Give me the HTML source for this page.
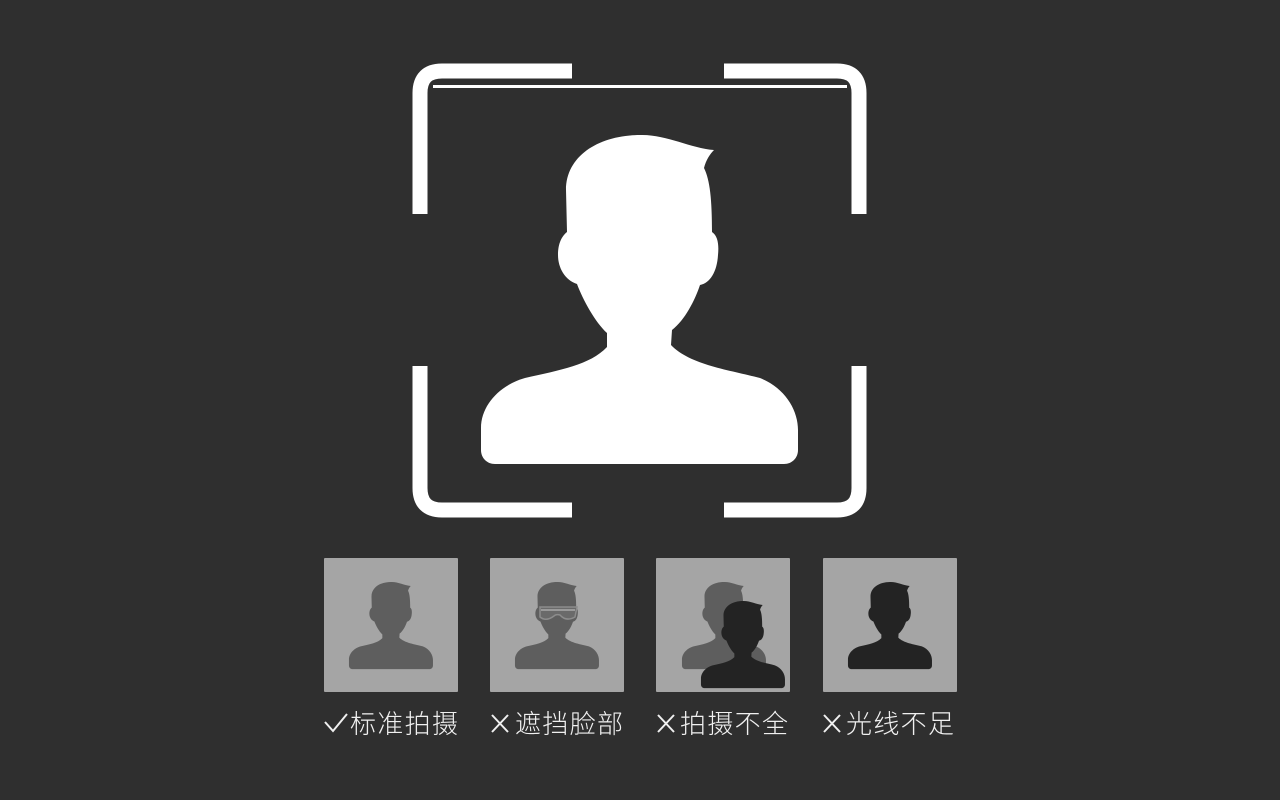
<!DOCTYPE html>
<html><head><meta charset="utf-8"><style>
html,body{margin:0;padding:0;background:#2f2f2f;width:1280px;height:800px;overflow:hidden}
svg{display:block}
text{font-family:"Liberation Sans","Noto Sans CJK SC",sans-serif;font-size:26px;fill:#f0f0f0;font-weight:300}
</style></head><body>
<svg width="1280" height="800" viewBox="0 0 1280 800">
<defs>
<path id="p" d="M640,135 C665,134 690,148 714,150 C710,154 706,160 704,168 C710,180 712,200 712,232 C718,236 719,245 718,255 C717,272 710,283 700,285 C695,300 685,320 672,330 L671,345 C690,365 730,370 760,378 C785,388 798,410 798,430 L798,450 C798,458 792,464 784,464 L495,464 C487,464 481,458 481,450 L481,428 C481,405 500,385 525,378 C560,370 590,365 607,347 L607,333 C595,322 583,300 577,284 C565,280 558,268 558,255 C558,243 562,236 567,232 L566,190 C566,155 600,135 640,135 Z"/>
</defs>
<rect width="1280" height="800" fill="#2f2f2f"/>
<g fill="none" stroke="#fff" stroke-width="15">
<path d="M572,71 L442,71 Q420,71 420,93 L420,214"/>
<path d="M724,71 L837,71 Q859,71 859,93 L859,214"/>
<path d="M420,366 L420,488 Q420,510 442,510 L572,510"/>
<path d="M859,366 L859,488 Q859,510 837,510 L724,510"/>
</g>
<rect x="433" y="85" width="414" height="3" fill="#fff"/>
<use href="#p" fill="#fff"/>
<g fill="#a5a5a5">
<rect x="324" y="558" width="134" height="134" rx="1"/>
<rect x="490" y="558" width="134" height="134" rx="1"/>
<rect x="656" y="558" width="134" height="134" rx="1"/>
<rect x="823" y="558" width="134" height="134" rx="1"/>
</g>
<use href="#p" fill="#5e5e5e" transform="translate(221.5,546.2) scale(0.265)"/>
<use href="#p" fill="#5e5e5e" transform="translate(387.5,546.2) scale(0.265)"/>
<path d="M540,607 L577,607 L575,617 Q566,622 560,615 Q556,614 554,616 Q546,622 540,617 Z" fill="#6a6a6a" stroke="#8c8c8c" stroke-width="1.5"/>
<rect x="541" y="609" width="34" height="2" fill="#9a9a9a"/>
<use href="#p" fill="#5e5e5e" transform="translate(554.5,546.2) scale(0.265)"/>
<use href="#p" fill="#232323" transform="translate(573.5,565.2) scale(0.265)"/>
<use href="#p" fill="#232323" transform="translate(720.5,546.2) scale(0.265)"/>
<g fill="none" stroke="#f0f0f0" stroke-width="2">
<path d="M325,722 L333,731 L347,714"/>
<path d="M492,715 L508,732 M508,715 L492,732"/>
<path d="M658,715 L674,732 M674,715 L658,732"/>
<path d="M824,715 L840,732 M840,715 L824,732"/>
</g>
<text x="350" y="733" textLength="108" lengthAdjust="spacing">标准拍摄</text>
<text x="515" y="733" textLength="108" lengthAdjust="spacing">遮挡脸部</text>
<text x="680" y="733" textLength="108" lengthAdjust="spacing">拍摄不全</text>
<text x="846" y="733" textLength="108" lengthAdjust="spacing">光线不足</text>
</svg>
</body></html>
